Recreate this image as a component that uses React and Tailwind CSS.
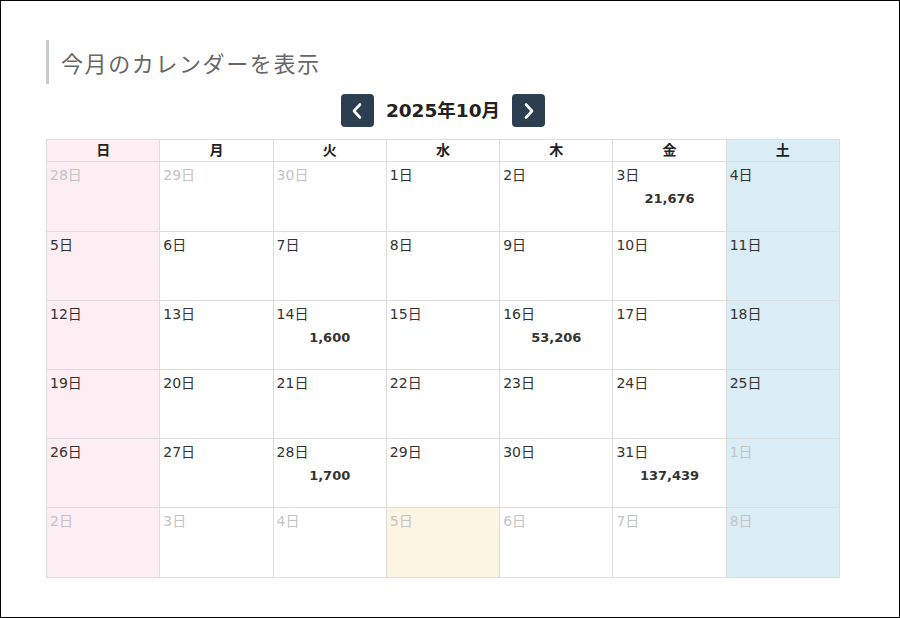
const WEEK = ['日', '月', '火', '水', '木', '金', '土']

// 2025年10月 — leading/trailing days from adjacent months
const weeks = [
  [{ d: 28, out: true }, { d: 29, out: true }, { d: 30, out: true }, { d: 1 }, { d: 2 }, { d: 3, amount: '21,676' }, { d: 4 }],
  [{ d: 5 }, { d: 6 }, { d: 7 }, { d: 8 }, { d: 9 }, { d: 10 }, { d: 11 }],
  [{ d: 12 }, { d: 13 }, { d: 14, amount: '1,600' }, { d: 15 }, { d: 16, amount: '53,206' }, { d: 17 }, { d: 18 }],
  [{ d: 19 }, { d: 20 }, { d: 21 }, { d: 22 }, { d: 23 }, { d: 24 }, { d: 25 }],
  [{ d: 26 }, { d: 27 }, { d: 28, amount: '1,700' }, { d: 29 }, { d: 30 }, { d: 31, amount: '137,439' }, { d: 1, out: true }],
  [{ d: 2, out: true }, { d: 3, out: true }, { d: 4, out: true }, { d: 5, out: true, today: true }, { d: 6, out: true }, { d: 7, out: true }, { d: 8, out: true }],
]

function Chevron({ dir }) {
  return (
    <svg width="14" height="18" viewBox="0 0 14 18" fill="none" stroke="white" strokeWidth="2.6" strokeLinecap="round" strokeLinejoin="round">
      {dir === 'left' ? <path d="M10 2.5L4 9l6 6.5" /> : <path d="M4 2.5L10 9l-6 6.5" />}
    </svg>
  )
}

function cellBg(col, today) {
  if (today) return 'bg-[#fdf5e3]'
  if (col === 0) return 'bg-[#fdeef4]'
  if (col === 6) return 'bg-[#daecf6]'
  return 'bg-white'
}

export default function App() {
  return (
    <div className="h-[618px] w-[900px] border border-black bg-white font-['DejaVu_Sans','Noto_Sans_CJK_JP',sans-serif] text-[#333]">
      <div className="pl-[45px] pt-[39px] w-[839px]">
        {/* Title */}
        <div className="border-l-[3px] border-[#cccccc] h-[44px] flex items-center pl-[12px]">
          <h2 className="text-[22px] text-[#666] font-['Noto_Sans_CJK_JP',sans-serif] font-normal leading-none tracking-[1.6px]">
            今月のカレンダーを表示
          </h2>
        </div>

        {/* Month nav */}
        <div className="mt-[10px] flex items-center justify-center w-[794px]">
          <button className="w-[33px] h-[33px] rounded-[4px] bg-[#2c3e50] flex items-center justify-center">
            <Chevron dir="left" />
          </button>
          <div className="mx-[12px] text-[18.5px] font-bold text-[#222]">2025年10月</div>
          <button className="w-[33px] h-[33px] rounded-[4px] bg-[#2c3e50] flex items-center justify-center">
            <Chevron dir="right" />
          </button>
        </div>

        {/* Calendar */}
        <table className="mt-[12px] w-[794px] table-fixed border-collapse text-[14px]">
          <thead>
            <tr className="h-[22px]">
              {WEEK.map((w, i) => (
                <th key={w} className={`border border-[#dddddd] font-bold text-[14px] text-[#222] p-0 ${cellBg(i)}`}>
                  {w}
                </th>
              ))}
            </tr>
          </thead>
          <tbody>
            {weeks.map((week, r) => (
              <tr key={r} className={r === 0 || r === 5 ? 'h-[70px]' : 'h-[69px]'}>
                {week.map((c, i) => (
                  <td key={i} className={`border border-[#dddddd] align-top px-[3px] pt-[5px] ${cellBg(i, c.today)}`}>
                    <div className={`leading-[16px] ${c.out ? 'text-[#c4c4c4]' : 'text-[#333]'}`}>{c.d}日</div>
                    {c.amount && (
                      <div className="mt-[8px] text-center font-bold text-[13px] leading-[16px] text-[#333]">{c.amount}</div>
                    )}
                  </td>
                ))}
              </tr>
            ))}
          </tbody>
        </table>
      </div>
    </div>
  )
}
